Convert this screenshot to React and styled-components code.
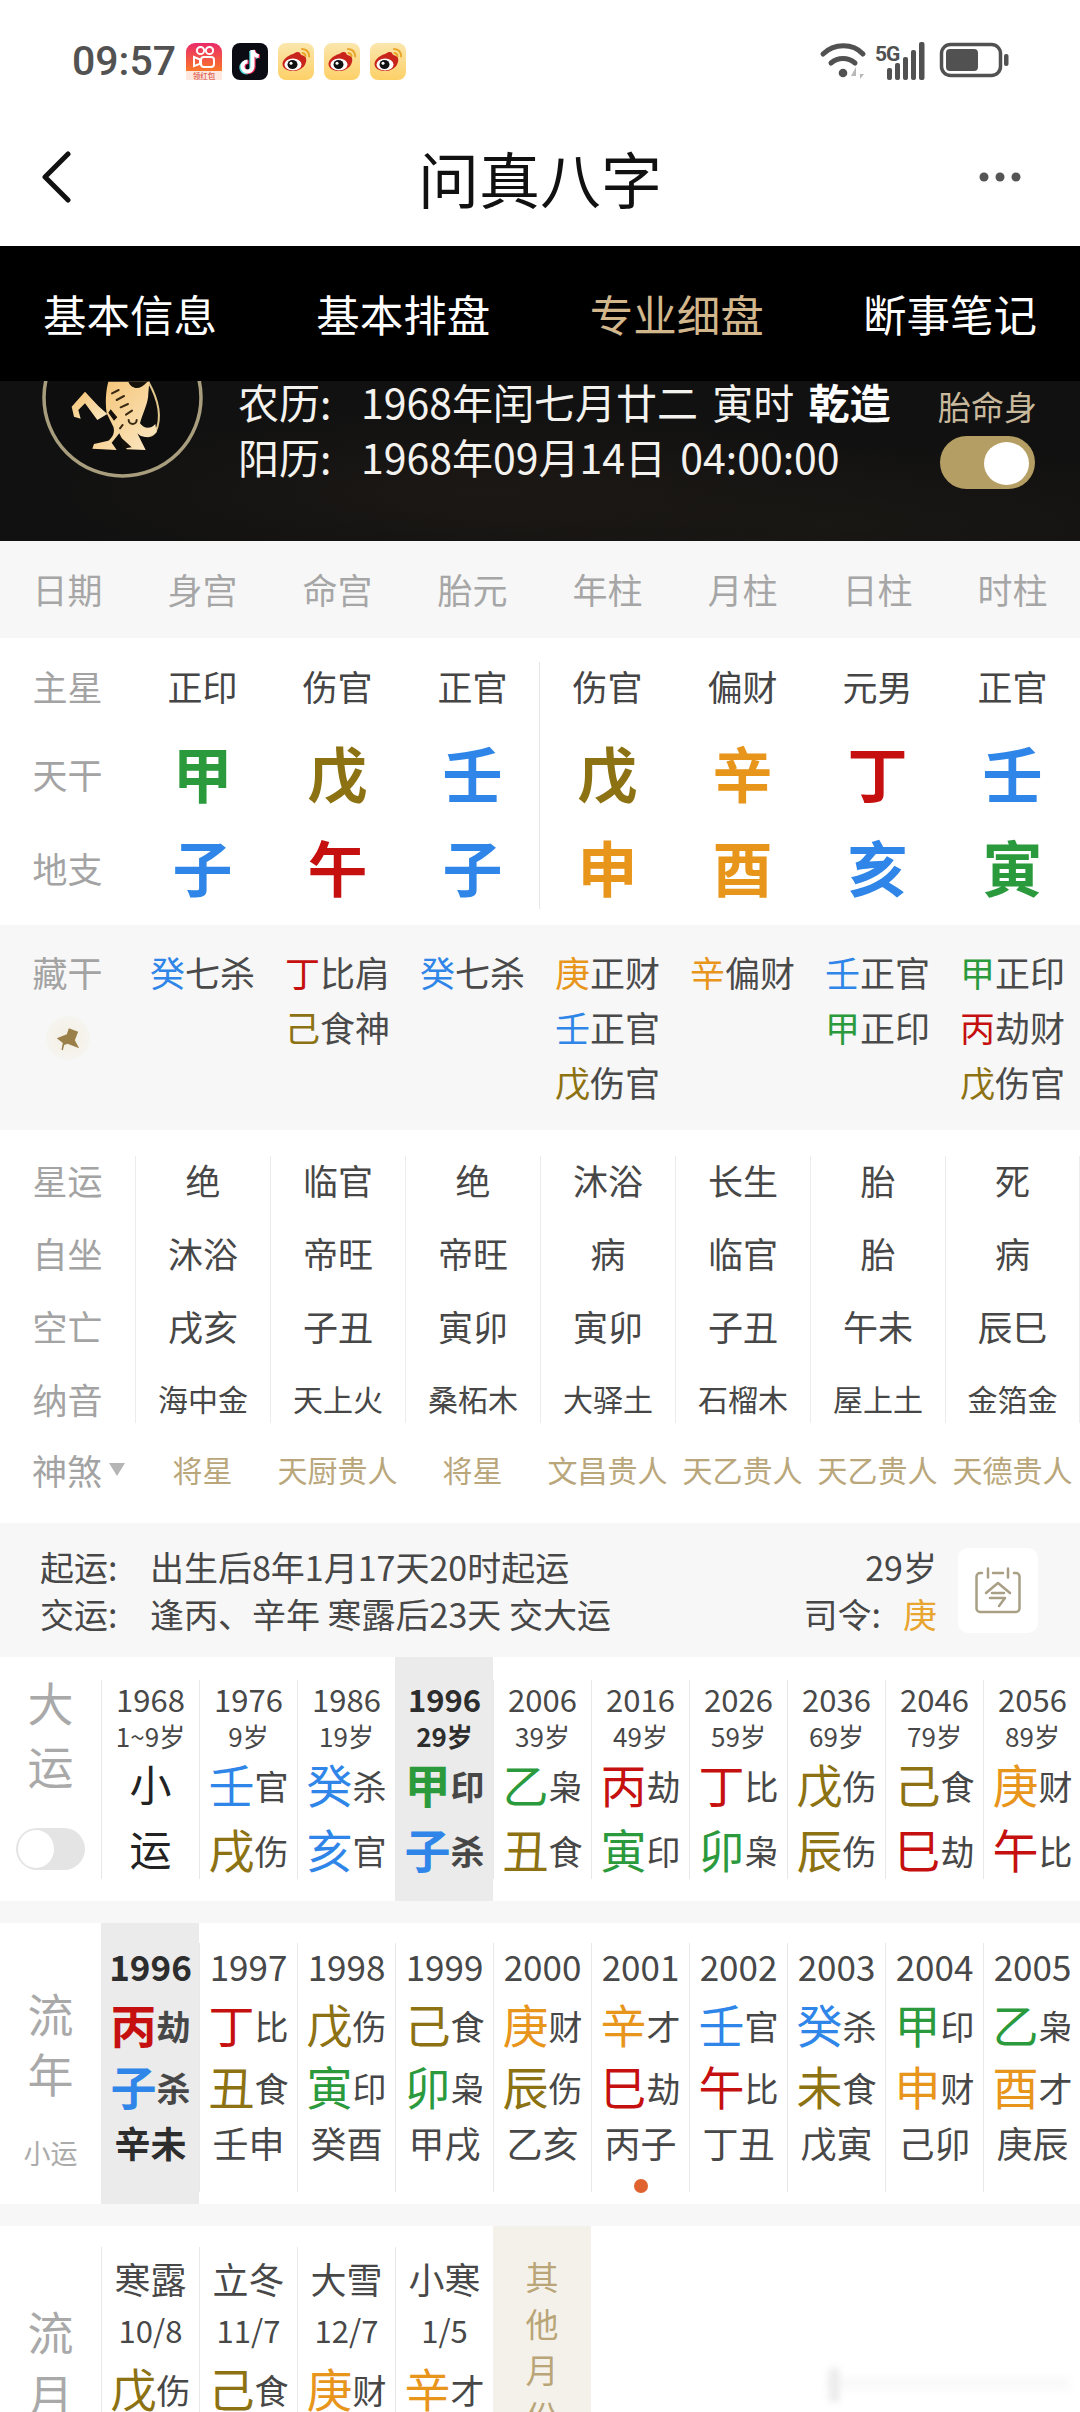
import React from "react";
import styled, { createGlobalStyle } from "styled-components";

const Global = createGlobalStyle`
  html, body { margin: 0; padding: 0; background: #fff; width: 1080px; height: 2412px; overflow: hidden; }
  body { font-family: "Noto Sans CJK SC", "Noto Sans", sans-serif; color: #444; }
  * { box-sizing: border-box; }
`;

const COLORS = { wood: "#2b9a3d", earth: "#8c7212", water: "#2f86e8", fire: "#c5100f", metal: "#e8951c" };
const ELEMENT = {
  甲: "wood", 乙: "wood", 丙: "fire", 丁: "fire", 戊: "earth", 己: "earth", 庚: "metal", 辛: "metal", 壬: "water", 癸: "water",
  子: "water", 丑: "earth", 寅: "wood", 卯: "wood", 辰: "earth", 巳: "fire", 午: "fire", 未: "earth", 申: "metal", 酉: "metal", 戌: "earth", 亥: "water",
};
const colorOf = (c) => COLORS[ELEMENT[c]] || "#222";

const Page = styled.div`
  width: 1080px; height: 2412px; overflow: hidden; display: flex; flex-direction: column; background: #fff; position: relative;
`;

/* status bar */
const StatusBar = styled.div`
  height: 122px; flex: none; display: flex; align-items: center; padding: 0 71px 0 72px;
`;
const Time = styled.div`
  font-family: Roboto, sans-serif; font-weight: 500; font-size: 41px; line-height: 1; color: #525252; width: 114px;
`;
const AppIcons = styled.div`display: flex; gap: 10px; align-items: center;`;
const StatusRight = styled.div`margin-left: auto; display: flex; align-items: center;`;

const Header = styled.div`
  height: 124px; flex: none; display: flex; align-items: center; justify-content: space-between;
  padding: 0 59px 14px 41px;
`;
const Title = styled.div`
  font-size: 61px; line-height: 1; color: #111; flex: 1; text-align: center; padding-left: 30px;
`;

const Tabs = styled.div`
  height: 135px; flex: none; background: #000; display: flex; align-items: center; justify-content: space-between; padding: 0 43px;
`;
const Tab = styled.div`
  font-size: 43.5px; line-height: 1; color: ${(p) => (p.$active ? "#d2b68c" : "#fff")};
`;

const Banner = styled.div`
  height: 160px; flex: none; display: flex; color: #fff;
  background:
    radial-gradient(ellipse at 45% 70%, #1c1815 0%, rgba(28, 24, 21, 0) 55%),
    radial-gradient(ellipse at 78% 90%, #191714 0%, rgba(25, 23, 20, 0) 40%),
    #111111;
`;
const LogoWrap = styled.div`
  flex: none; width: 161px; height: 97px; margin-left: 42px; overflow: hidden; display: flex; align-items: flex-end;
`;
const BirthInfo = styled.div`
  margin-left: 35px; margin-top: -3px; display: flex; flex-direction: column; gap: 9px;
`;
const BirthLine = styled.div`
  display: flex; font-size: 41px; line-height: 46px; white-space: pre; height: 46px; color: #f4f2ee; word-spacing: 5px;
`;
const BirthKey = styled.span`width: 123px; flex: none;`;
const Strong = styled.b`font-weight: 700; color: #fff;`;
const BodySwitch = styled.div`
  margin-left: auto; margin-right: 43px; padding-top: 5px; display: flex; flex-direction: column; align-items: center; width: 99px;
`;
const BodyLabel = styled.div`font-size: 33px; line-height: 40px; color: #c9b99c; white-space: nowrap;`;
const Toggle = styled.div`
  margin-top: 10px; width: 95px; height: 53px; border-radius: 27px; background: #b59e63; padding: 6px 6px 5px 44px;
`;
const Knob = styled.div`width: 45px; height: 43px; border-radius: 50%; background: #fff;`;

/* pillars */
const Col8 = styled.div`display: grid; grid-template-columns: repeat(8, 135px);`;
const HeadRow = styled(Col8)`
  height: 97px; flex: none; background: #f7f7f7; align-items: center; text-align: center; font-size: 35px; color: #a6a6a6; padding-bottom: 2px;
`;
const MainSection = styled.div`
  height: 287px; flex: none; position: relative;
  &::after { content: ""; position: absolute; left: 539px; top: 24px; width: 1px; height: 247px; background: #e6e6e6; }
`;
const MainRow = styled(Col8)`height: ${(p) => p.$h}px; align-items: center; text-align: center; padding-bottom: 4px;`;
const SideLabel = styled.div`font-size: 35px; line-height: 1; color: #a3a3a3; text-align: center;`;
const Plain = styled.div`font-size: 35px; line-height: 1; color: #454545;`;
const BigChar = styled.div`
  font-size: 60px; line-height: 1; font-weight: 700; margin-top: -2px; color: ${(p) => p.$c};
`;

const HiddenSection = styled(Col8)`
  height: 205px; flex: none; background: #f7f7f7; padding-top: 19px; text-align: center;
`;
const HiddenLabelCol = styled.div`
  display: flex; flex-direction: column; align-items: center; font-size: 35px; line-height: 55px; color: #a3a3a3;
`;
const PinHalo = styled.div`
  margin-top: 17px; width: 44px; height: 44px; border-radius: 50%; display: flex; align-items: center; justify-content: center;
  background: radial-gradient(circle, #f3efe4 0%, #f5f3ec 55%, rgba(247, 247, 247, 0) 100%);
`;
const HiddenLine = styled.div`font-size: 35px; line-height: 55px; color: #4a4a4a; white-space: nowrap;`;
const Tone = styled.span`color: ${(p) => p.$c};`;

const FateSection = styled.div`
  height: 393px; flex: none; padding-top: 26px;
`;
const FateGrid = styled(Col8)`height: 267px;`;
const FateCol = styled.div`
  display: flex; flex-direction: column; gap: 23px; align-items: center; height: 267px;
  border-left: ${(p) => (p.$first ? "none" : "1px solid #ececec")};
  ${(p) => (p.$last ? "border-right: 1px solid #ececec;" : "")}
`;
const FateCell = styled.div`
  height: 50px; flex: none; line-height: 47px; white-space: nowrap;
  font-size: ${(p) => p.$s || 35}px; color: ${(p) => p.$c || "#474747"};
`;
const ShenshaRow = styled(Col8)`margin-top: 21px; height: 50px; align-items: center; text-align: center;`;
const ShenshaLabel = styled.div`
  display: flex; align-items: center; gap: 7px; padding-left: 32px; font-size: 35px; line-height: 1; color: #a3a3a3;
`;
const Caret = styled.span`
  width: 0; height: 0; border-left: 8px solid transparent; border-right: 8px solid transparent; border-top: 13px solid #b5b5b5;
`;
const Shensha = styled.div`font-size: 30px; line-height: 1; color: #b9a77b; white-space: nowrap;`;

const InfoBar = styled.div`
  height: 134px; flex: none; background: #f7f7f7; display: flex; align-items: center; padding: 0 42px 0 40px; color: #474747; font-size: 34px;
`;
const InfoText = styled.div`flex: 1;`;
const InfoLine = styled.div`display: flex; line-height: 47px; white-space: nowrap;`;
const InfoKey = styled.span`width: 110px; flex: none;`;
const InfoRight = styled.div`text-align: right; line-height: 47px; white-space: nowrap;`;
const Gold = styled.span`color: #e8a52f; margin-left: 22px;`;
const TodayBtn = styled.div`
  margin-left: 21px; width: 80px; height: 85px; border-radius: 10px; background: #fff; display: flex; align-items: center; justify-content: center;
`;

const Band = styled.div`height: 22px; flex: none; background: #f7f7f7;`;

/* luck rows */
const LuckSection = styled.div`
  flex: none; height: ${(p) => p.$h}px; display: grid; grid-template-columns: 101px repeat(10, 98px);
`;
const LuckLabel = styled.div`
  display: flex; flex-direction: column; align-items: center; padding-top: ${(p) => p.$pad}px;
`;
const LabelChar = styled.div`font-size: 46px; line-height: ${(p) => p.$lh}px; color: #a9a9a9;`;
const Mini = styled.div`margin-top: 31px; font-size: 27px; line-height: 40px; color: #ababab;`;
const OffToggle = styled.div`
  margin-top: 32px; width: 69px; height: 42px; border-radius: 21px; background: #e4e4e4; padding: 2px;
`;
const OffKnob = styled.div`width: 36px; height: 38px; border-radius: 50%; background: #fff;`;

const LuckCol = styled.div`
  padding-top: ${(p) => p.$top}px; background: ${(p) => (p.$hl ? "#ebebeb" : "transparent")};
`;
const LuckInner = styled.div`
  height: ${(p) => p.$h}px; border-left: ${(p) => (p.$hl ? "1px solid transparent" : "1px solid #e8e8e8")};
  display: flex; flex-direction: column; align-items: center; font-weight: ${(p) => (p.$hl ? 700 : 400)};
`;
const Year = styled.div`
  flex: none; height: ${(p) => p.$h}px; line-height: ${(p) => p.$h - 3}px; font-size: ${(p) => p.$s}px; color: ${(p) => (p.$hl ? "#2d2d2d" : "#484848")}; white-space: nowrap;
`;
const Pair = styled.div`
  height: ${(p) => p.$h}px; display: flex; align-items: center; white-space: nowrap; padding-bottom: 8px; flex: none;
`;
const Stem = styled.span`font-size: 46px; line-height: 1; color: ${(p) => p.$c};`;
const God = styled.span`font-size: 34px; line-height: 1; color: #474747; padding-top: 6px;`;
const Plainchar = styled.span`font-size: 42px; line-height: 1; color: #222;`;
const Dot = styled.div`flex: none; width: 14px; height: 14px; margin-top: 6px; border-radius: 50%; background: #e0622f;`;

const Other = styled.div`
  background: #f4f1ea; padding-top: 27px; display: flex; flex-direction: column; align-items: center; color: #b9a577; font-size: 33px; line-height: 46.5px;
`;
const Watermark = styled.div`
  position: absolute; left: 826px; top: 2368px; width: 244px; height: 34px; filter: blur(3px); opacity: 0.5;
  background:
    linear-gradient(90deg, transparent 2px, #d8d8d8 4px, #d8d8d8 12px, transparent 15px),
    linear-gradient(180deg, transparent 8px, #f4f4f4 10px, #f4f4f4 20px, transparent 24px);
`;

/* icons */
const Kuaishou = () => (
  <svg width="36" height="37" viewBox="0 0 36 37">
    <defs>
      <linearGradient id="ks" x1="0" y1="0" x2="0" y2="1">
        <stop offset="0" stopColor="#ea2a6a" />
        <stop offset="1" stopColor="#fb7a27" />
      </linearGradient>
    </defs>
    <path d="M9 0h18a9 9 0 0 1 9 9v20H0V9a9 9 0 0 1 9-9z" fill="url(#ks)" />
    <rect x="0" y="28" width="36" height="9" fill="#fde7df" />
    <g fill="none" stroke="#fff" strokeWidth="2">
      <circle cx="14.5" cy="7.5" r="3.6" />
      <circle cx="23.5" cy="7.5" r="3.6" />
      <rect x="15" y="14" width="13" height="10" rx="3" />
      <path d="M14 16.5l-6-2.4v9l6-2.4z" />
    </g>
    <text x="18" y="35.5" textAnchor="middle" fontSize="7.5" fill="#d6392a" fontFamily="Noto Sans CJK SC">领红包</text>
  </svg>
);
const Tiktok = () => (
  <svg width="36" height="37" viewBox="0 0 36 37">
    <rect width="36" height="37" rx="8" fill="#0b0b14" />
    <path d="M20.5 7v16.5a5 5 0 1 1-5-5" fill="none" stroke="#4fd8dc" strokeWidth="4" transform="translate(-1.2 1)" />
    <path d="M20.5 7c.6 3.6 2.8 5.6 6.2 6" fill="none" stroke="#4fd8dc" strokeWidth="4" transform="translate(-1.2 1)" />
    <path d="M20.5 7v16.5a5 5 0 1 1-5-5" fill="none" stroke="#ee2a55" strokeWidth="4" transform="translate(1.2 .6)" />
    <path d="M20.5 7c.6 3.6 2.8 5.6 6.2 6" fill="none" stroke="#ee2a55" strokeWidth="4" transform="translate(1.2 .6)" />
    <path d="M20.5 7v16.5a5 5 0 1 1-5-5" fill="none" stroke="#fff" strokeWidth="4" />
    <path d="M20.5 7c.6 3.6 2.8 5.6 6.2 6" fill="none" stroke="#fff" strokeWidth="4" />
  </svg>
);
const Weibo = ({ id }) => (
  <svg width="36" height="37" viewBox="0 0 36 37">
    <defs>
      <linearGradient id={id} x1="0" y1="0" x2="0" y2="1">
        <stop offset="0" stopColor="#fae6ad" />
        <stop offset="1" stopColor="#fdd067" />
      </linearGradient>
    </defs>
    <rect width="36" height="37" rx="8" fill={`url(#${id})`} />
    <path d="M15 11c4-3 7-2.500 7.500 0 .3 1.500 2.500 1 4.500 2.500 2 2 1.500 6-.5 9-2.500 3.500-7 5.500-11.500 5.500-5.500 0-10.500-2.500-10.500-7 0-3.500 4-8 10.500-10z" fill="#c8241c" />
    <ellipse cx="15" cy="21.500" rx="8.500" ry="6" fill="#fff" />
    <ellipse cx="14.500" cy="21.500" rx="5" ry="4.500" fill="#111" />
    <circle cx="13" cy="20.300" r="1.500" fill="#fff" />
    <path d="M24 6c4.500.3 7 3 7.200 7.500M24.500 10c2 .2 2.800 1.200 3 3" fill="none" stroke="#e9a52a" strokeWidth="2" strokeLinecap="round" />
  </svg>
);
const StatusGlyphs = () => (
  <svg width="190" height="40" viewBox="0 0 190 40">
    <g fill="none" stroke="#515151" strokeLinecap="round">
      <path d="M4 13c11-11 30-11 40 0" strokeWidth="5" />
      <path d="M12 22c7-6 17-6 24 0" strokeWidth="5" />
    </g>
    <circle cx="24" cy="32" r="4.300" fill="#515151" />
    <path d="M37 26l-5 9h5zM41 27v6h4l-4 5z" fill="#b8b8b8" />
    <text x="56" y="20" fontFamily="Roboto" fontWeight="700" fontSize="21" fill="#515151" letterSpacing="-1">5G</text>
    <g fill="#515151">
      <rect x="68" y="27" width="5" height="12" rx="2" />
      <rect x="76" y="22" width="5" height="17" rx="2" />
      <rect x="84" y="16" width="5" height="23" rx="2" />
      <rect x="92" y="9" width="5" height="30" rx="2" />
      <rect x="100" y="1" width="5.500" height="38" rx="2" />
    </g>
    <rect x="122.500" y="3.500" width="59" height="31" rx="9" fill="none" stroke="#515151" strokeWidth="3.500" />
    <rect x="127" y="8" width="32" height="22" rx="4" fill="#515151" />
    <rect x="185" y="13" width="4.500" height="12" rx="2" fill="#515151" />
  </svg>
);
const BackIcon = () => (
  <svg width="30" height="52" viewBox="0 0 30 52">
    <path d="M27 3L4 26l23 23" fill="none" stroke="#111" strokeWidth="5" strokeLinecap="round" strokeLinejoin="round" />
  </svg>
);
const MoreIcon = () => (
  <svg width="42" height="10" viewBox="0 0 42 10">
    <g fill="#555"><circle cx="5" cy="5" r="4.500" /><circle cx="21" cy="5" r="4.500" /><circle cx="37" cy="5" r="4.500" /></g>
  </svg>
);
const TigerLogo = () => (
  <svg width="161" height="161" viewBox="0 0 161 161" style={{ flex: "none" }}>
    <defs>
      <linearGradient id="tg" x1="0" y1="0" x2="1" y2="1">
        <stop offset="0" stopColor="#f4c272" />
        <stop offset="1" stopColor="#fbe8c4" />
      </linearGradient>
    </defs>
    <circle cx="80.500" cy="80.500" r="78.500" fill="#0e0e0f" stroke="#a89e7e" strokeWidth="3.500" />
    <g transform="translate(-42 53) scale(.33333)">
      <path fill="none" stroke="#e2c78c" strokeWidth="6" d="M445 35c28 50 42 105 22 150-10 15-28 18-40 8" />
      <path fill="url(#tg)" d="M325 35H448L445 70C445 100 430 125 420 160C430 175 450 180 466 162L470 186C450 205 425 205 412 190L437 240L380 238L358 190L335 218L350 240L277 236L282 222L325 212C340 200 345 185 340 170L320 130C315 95 318 60 325 35Z" />
      <path fill="url(#tg)" d="M215 110L255 65L295 108L322 132L292 150L255 100L235 120L242 146L222 140Z" />
      <path fill="#17110b" d="M385 35C395 58 420 62 442 35ZM332 118L352 142L342 152L325 128ZM355 195L395 232L368 236Z" />
      <path fill="none" stroke="#3a2a14" strokeWidth="6" strokeLinecap="round" d="M336 70L356 60M350 90L372 78M362 112L384 102M378 134L396 122M386 150A12 12 0 1 0 410 150M360 175L368 165" />
    </g>
  </svg>
);
const PinIcon = () => (
  <svg width="27" height="25" viewBox="160 315 80 75">
    <path fill="#9b7f48" d="M168 352L198 340L204 322L232 332L222 358L235 382L200 368L190 372L186 388L182 386L186 366Z" />
  </svg>
);
const CalendarToday = () => (
  <svg width="46" height="47" viewBox="0 0 46 47">
    <g fill="none" stroke="#a89f85" strokeWidth="2.500" strokeLinecap="round" strokeLinejoin="round">
      <path d="M7 6H5a3.500 3.500 0 0 0-3.500 3.500v32A3.500 3.500 0 0 0 5 45h36a3.500 3.500 0 0 0 3.500-3.500v-32A3.500 3.500 0 0 0 41 6h-2" />
      <path d="M13 1.500v9M33 1.500v9M18 6h10" />
      <path d="M23 16L11 26M23 16l12 10M17 26h12M15 31h15l-6 8" />
    </g>
  </svg>
);

const HEAD = ["日期", "身宫", "命宫", "胎元", "年柱", "月柱", "日柱", "时柱"];
const STARS = ["正印", "伤官", "正官", "伤官", "偏财", "元男", "正官"];
const STEMS = ["甲", "戊", "壬", "戊", "辛", "丁", "壬"];
const BRANCHES = ["子", "午", "子", "申", "酉", "亥", "寅"];
const HIDDEN = [
  [["癸", "七杀"]],
  [["丁", "比肩"], ["己", "食神"]],
  [["癸", "七杀"]],
  [["庚", "正财"], ["壬", "正官"], ["戊", "伤官"]],
  [["辛", "偏财"]],
  [["壬", "正官"], ["甲", "正印"]],
  [["甲", "正印"], ["丙", "劫财"], ["戊", "伤官"]],
];
const FATE = [
  ["绝", "沐浴", "戌亥", "海中金"],
  ["临官", "帝旺", "子丑", "天上火"],
  ["绝", "帝旺", "寅卯", "桑柘木"],
  ["沐浴", "病", "寅卯", "大驿土"],
  ["长生", "临官", "子丑", "石榴木"],
  ["胎", "胎", "午未", "屋上土"],
  ["死", "病", "辰巳", "金箔金"],
];
const SHENSHA = ["将星", "天厨贵人", "将星", "文昌贵人", "天乙贵人", "天乙贵人", "天德贵人"];
const DAYUN = [
  ["1968", "1~9岁", "小", "", "运", ""],
  ["1976", "9岁", "壬", "官", "戌", "伤"],
  ["1986", "19岁", "癸", "杀", "亥", "官"],
  ["1996", "29岁", "甲", "印", "子", "杀"],
  ["2006", "39岁", "乙", "枭", "丑", "食"],
  ["2016", "49岁", "丙", "劫", "寅", "印"],
  ["2026", "59岁", "丁", "比", "卯", "枭"],
  ["2036", "69岁", "戊", "伤", "辰", "伤"],
  ["2046", "79岁", "己", "食", "巳", "劫"],
  ["2056", "89岁", "庚", "财", "午", "比"],
];
const LIUNIAN = [
  ["1996", "丙", "劫", "子", "杀", "辛未"],
  ["1997", "丁", "比", "丑", "食", "壬申"],
  ["1998", "戊", "伤", "寅", "印", "癸酉"],
  ["1999", "己", "食", "卯", "枭", "甲戌"],
  ["2000", "庚", "财", "辰", "伤", "乙亥"],
  ["2001", "辛", "才", "巳", "劫", "丙子"],
  ["2002", "壬", "官", "午", "比", "丁丑"],
  ["2003", "癸", "杀", "未", "食", "戊寅"],
  ["2004", "甲", "印", "申", "财", "己卯"],
  ["2005", "乙", "枭", "酉", "才", "庚辰"],
];
const LIUYUE = [
  ["寒露", "10/8", "戊", "伤"],
  ["立冬", "11/7", "己", "食"],
  ["大雪", "12/7", "庚", "财"],
  ["小寒", "1/5", "辛", "才"],
];

export default function App() {
  return (
    <Page>
      <Global />
      <StatusBar>
        <Time>09:57</Time>
        <AppIcons>
          <Kuaishou />
          <Tiktok />
          <Weibo id="wb1" />
          <Weibo id="wb2" />
          <Weibo id="wb3" />
        </AppIcons>
        <StatusRight>
          <StatusGlyphs />
        </StatusRight>
      </StatusBar>
      <Header>
        <BackIcon />
        <Title>问真八字</Title>
        <MoreIcon />
      </Header>
      <Tabs>
        <Tab>基本信息</Tab>
        <Tab>基本排盘</Tab>
        <Tab $active>专业细盘</Tab>
        <Tab>断事笔记</Tab>
      </Tabs>
      <Banner>
        <LogoWrap><TigerLogo /></LogoWrap>
        <BirthInfo>
          <BirthLine><BirthKey>农历:</BirthKey>1968年闰七月廿二 寅时 <Strong>乾造</Strong></BirthLine>
          <BirthLine><BirthKey>阳历:</BirthKey>1968年09月14日 04:00:00</BirthLine>
        </BirthInfo>
        <BodySwitch>
          <BodyLabel>胎命身</BodyLabel>
          <Toggle><Knob /></Toggle>
        </BodySwitch>
      </Banner>
      <HeadRow>{HEAD.map((h, i) => <div key={i}>{h}</div>)}</HeadRow>
      <MainSection>
        <MainRow $h={98}>
          <SideLabel>主星</SideLabel>
          {STARS.map((s, i) => <Plain key={i}>{s}</Plain>)}
        </MainRow>
        <MainRow $h={78}>
          <SideLabel>天干</SideLabel>
          {STEMS.map((s, i) => <BigChar key={i} $c={colorOf(s)}>{s}</BigChar>)}
        </MainRow>
        <MainRow $h={110}>
          <SideLabel>地支</SideLabel>
          {BRANCHES.map((s, i) => <BigChar key={i} $c={colorOf(s)}>{s}</BigChar>)}
        </MainRow>
      </MainSection>
      <HiddenSection>
        <HiddenLabelCol>
          藏干
          <PinHalo><PinIcon /></PinHalo>
        </HiddenLabelCol>
        {HIDDEN.map((col, i) => (
          <div key={i}>
            {col.map(([s, g], j) => (
              <HiddenLine key={j}><Tone $c={colorOf(s)}>{s}</Tone>{g}</HiddenLine>
            ))}
          </div>
        ))}
      </HiddenSection>
      <FateSection>
        <FateGrid>
          <FateCol $first>
            {["星运", "自坐", "空亡", "纳音"].map((l) => <FateCell key={l} $c="#a3a3a3">{l}</FateCell>)}
          </FateCol>
          {FATE.map((col, i) => (
            <FateCol key={i} $last={i === 6}>
              {col.map((t, j) => <FateCell key={j} $s={j === 3 ? 30 : 35}>{t}</FateCell>)}
            </FateCol>
          ))}
        </FateGrid>
        <ShenshaRow>
          <ShenshaLabel>神煞<Caret /></ShenshaLabel>
          {SHENSHA.map((s, i) => <Shensha key={i}>{s}</Shensha>)}
        </ShenshaRow>
      </FateSection>
      <InfoBar>
        <InfoText>
          <InfoLine><InfoKey>起运:</InfoKey>出生后8年1月17天20时起运</InfoLine>
          <InfoLine><InfoKey>交运:</InfoKey>逢丙、辛年 寒露后23天 交大运</InfoLine>
        </InfoText>
        <InfoRight>
          <div>29岁</div>
          <div>司令:<Gold>庚</Gold></div>
        </InfoRight>
        <TodayBtn><CalendarToday /></TodayBtn>
      </InfoBar>
      <LuckSection $h={244}>
        <LuckLabel $pad={13}>
          <LabelChar $lh={63}>大</LabelChar>
          <LabelChar $lh={63}>运</LabelChar>
          <OffToggle><OffKnob /></OffToggle>
        </LuckLabel>
        {DAYUN.map(([y, a, s, g, b, g2]) => {
          const hl = y === "1996";
          return (
            <LuckCol key={y} $top={23} $hl={hl}>
              <LuckInner $h={199} $hl={hl}>
                <Year $h={40} $s={31} $hl={hl}>{y}</Year>
                <Year $h={34} $s={26} $hl={hl}>{a}</Year>
                <Pair $h={66}>{g ? <><Stem $c={colorOf(s)}>{s}</Stem><God>{g}</God></> : <Plainchar>{s}</Plainchar>}</Pair>
                <Pair $h={64}>{g2 ? <><Stem $c={colorOf(b)}>{b}</Stem><God>{g2}</God></> : <Plainchar>{b}</Plainchar>}</Pair>
              </LuckInner>
            </LuckCol>
          );
        })}
      </LuckSection>
      <Band />
      <LuckSection $h={281}>
        <LuckLabel $pad={59}>
          <LabelChar $lh={60}>流</LabelChar>
          <LabelChar $lh={60}>年</LabelChar>
          <Mini>小运</Mini>
        </LuckLabel>
        {LIUNIAN.map(([y, s, g, b, g2, xy]) => {
          const hl = y === "1996";
          return (
            <LuckCol key={y} $top={20} $hl={hl}>
              <LuckInner $h={249} $hl={hl}>
                <Year $h={48} $s={35} $hl={hl}>{y}</Year>
                <Pair $h={72}><Stem $c={colorOf(s)}>{s}</Stem><God>{g}</God></Pair>
                <Pair $h={52}><Stem $c={colorOf(b)}>{b}</Stem><God>{g2}</God></Pair>
                <Year $h={58} $s={36} $hl={hl}>{xy}</Year>
                {y === "2001" && <Dot />}
              </LuckInner>
            </LuckCol>
          );
        })}
      </LuckSection>
      <Band />
      <LuckSection $h={186}>
        <LuckLabel $pad={73}>
          <LabelChar $lh={63}>流</LabelChar>
          <LabelChar $lh={63}>月</LabelChar>
        </LuckLabel>
        {LIUYUE.map(([j, d, s, g]) => (
          <LuckCol key={j} $top={21}>
            <LuckInner $h={165}>
              <Year $h={66} $s={36}>{j}</Year>
              <Year $h={36} $s={31}>{d}</Year>
              <Pair $h={83}><Stem $c={colorOf(s)}>{s}</Stem><God>{g}</God></Pair>
            </LuckInner>
          </LuckCol>
        ))}
        <Other>
          <div>其</div>
          <div>他</div>
          <div>月</div>
          <div>份</div>
        </Other>
      </LuckSection>
      <Watermark />
    </Page>
  );
}
